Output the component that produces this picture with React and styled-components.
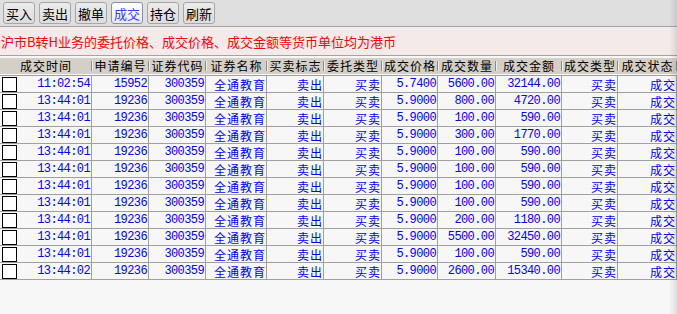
import React from "react";
import styled, { createGlobalStyle } from "styled-components";

const GlobalStyle = createGlobalStyle`
  html, body {
    margin: 0;
    padding: 0;
    background: #f7f7f7;
    overflow: hidden;
  }
  body {
    font-family: "Noto Sans CJK SC", "DejaVu Sans", sans-serif;
    font-size: 13px;
  }
`;

const cols = [92, 57, 57, 61, 57, 58, 56, 58, 66, 56, 59];
const gridCols = cols.map((w) => w + "px").join(" ");

const headers = [
  "成交时间",
  "申请编号",
  "证券代码",
  "证券名称",
  "买卖标志",
  "委托类型",
  "成交价格",
  "成交数量",
  "成交金额",
  "成交类型",
  "成交状态",
];

const rows = [
  ["11:02:54", "15952", "5.7400", "5600.00", "32144.00"],
  ["13:44:01", "19236", "5.9000", "800.00", "4720.00"],
  ["13:44:01", "19236", "5.9000", "100.00", "590.00"],
  ["13:44:01", "19236", "5.9000", "300.00", "1770.00"],
  ["13:44:01", "19236", "5.9000", "100.00", "590.00"],
  ["13:44:01", "19236", "5.9000", "100.00", "590.00"],
  ["13:44:01", "19236", "5.9000", "100.00", "590.00"],
  ["13:44:01", "19236", "5.9000", "100.00", "590.00"],
  ["13:44:01", "19236", "5.9000", "200.00", "1180.00"],
  ["13:44:01", "19236", "5.9000", "5500.00", "32450.00"],
  ["13:44:01", "19236", "5.9000", "100.00", "590.00"],
  ["13:44:02", "19236", "5.9000", "2600.00", "15340.00"],
];

const buttons = ["买入", "卖出", "撤单", "成交", "持仓", "刷新"];

const Page = styled.div`
  width: 677px;
  height: 314px;
  overflow: hidden;
  position: relative;
  background: #f7f7f7;
`;

const Toolbar = styled.div`
  height: 27px;
  background: #dfdfdf;
  border-bottom: 1px solid #a4a4a4;
  display: flex;
  align-items: center;
  gap: 4px;
  padding-left: 3px;
  box-sizing: border-box;
`;

const ToolButton = styled.div`
  width: 32px;
  height: 22px;
  box-sizing: border-box;
  border: 1px solid ${(p) => (p.$active ? "#8a8fa8" : "#a6a6a6")};
  border-radius: 3px;
  background: ${(p) =>
    p.$active
      ? "linear-gradient(#ffffff, #e8e8f4)"
      : "linear-gradient(#ececec, #dcdcdc)"};
  color: ${(p) => (p.$active ? "#3a3aff" : "#000")};
  font-size: 13px;
  display: flex;
  align-items: center;
  justify-content: center;
  line-height: 1;
`;

const Notice = styled.div`
  height: 29px;
  background: #f4eaea;
  border-bottom: 1px solid #a4a4a4;
  color: #ff0000;
  font-size: 13px;
  display: flex;
  align-items: center;
  padding-left: 1px;
  box-sizing: border-box;
`;

const Table = styled.div`
  padding-top: 2px;
`;

const HeaderRow = styled.div`
  display: grid;
  grid-template-columns: ${gridCols};
  height: 16px;
  background: #d4d0c8;
`;

const HeaderCell = styled.div`
  position: relative;
  display: flex;
  align-items: center;
  justify-content: center;
  color: #000;
  font-size: 12px;
  letter-spacing: 1px;
  line-height: 16px;
  white-space: nowrap;
  &::after {
    content: "";
    position: absolute;
    right: 0;
    top: 3px;
    width: 1px;
    height: 10px;
    background: #8c8a84;
    box-shadow: 1px 0 0 #f0eee8;
  }
`;

const Body = styled.div`
  margin-top: 1px;
`;

const Row = styled.div`
  display: grid;
  grid-template-columns: ${gridCols};
  height: 17px;
  box-sizing: border-box;
  border-top: 1px solid #a0a0a0;
  &:last-child {
    border-bottom: 1px solid #a0a0a0;
    height: 18px;
  }
`;

const Cell = styled.div`
  border-right: 1px solid #a0a0a0;
  box-sizing: border-box;
  display: flex;
  align-items: center;
  justify-content: ${(p) => (p.$check ? "space-between" : "flex-end")};
  padding-right: ${(p) => (p.$num ? "1px" : "0")};
  color: #0000ff;
  white-space: nowrap;
  overflow: hidden;
  font-family: ${(p) =>
    p.$num
      ? '"Liberation Mono", "DejaVu Sans Mono", monospace'
      : '"Noto Sans CJK SC", sans-serif'};
  font-size: 12px;
  letter-spacing: ${(p) => (p.$num ? "-0.6px" : "1px")};
  line-height: 15px;
`;

const CheckBox = styled.span`
  width: 15px;
  height: 15px;
  margin-left: 2px;
  box-sizing: border-box;
  border: 1px solid #000;
  background: #fff;
  flex: none;
`;

const EdgeShade = styled.div`
  position: absolute;
  top: 0;
  right: 0;
  width: 8px;
  height: 100%;
  background: linear-gradient(90deg, rgba(0, 0, 0, 0), rgba(0, 0, 0, 0.1));
  pointer-events: none;
`;

const App = () => {
  return (
    <Page>
      <GlobalStyle />
      <Toolbar>
        {buttons.map((b) => (
          <ToolButton key={b} $active={b === "成交"}>
            {b}
          </ToolButton>
        ))}
      </Toolbar>
      <Notice>沪市B转H业务的委托价格、成交价格、成交金额等货币单位均为港币</Notice>
      <Table>
        <HeaderRow>
          {headers.map((h) => (
            <HeaderCell key={h}>{h}</HeaderCell>
          ))}
        </HeaderRow>
        <Body>
          {rows.map((r, i) => (
            <Row key={i}>
              <Cell $check $num>
                <CheckBox />
                {r[0]}
              </Cell>
              <Cell $num>{r[1]}</Cell>
              <Cell $num>300359</Cell>
              <Cell>全通教育</Cell>
              <Cell>卖出</Cell>
              <Cell>买卖</Cell>
              <Cell $num>{r[2]}</Cell>
              <Cell $num>{r[3]}</Cell>
              <Cell $num>{r[4]}</Cell>
              <Cell>买卖</Cell>
              <Cell>成交</Cell>
            </Row>
          ))}
        </Body>
      </Table>
      <EdgeShade />
    </Page>
  );
};

export default App;
